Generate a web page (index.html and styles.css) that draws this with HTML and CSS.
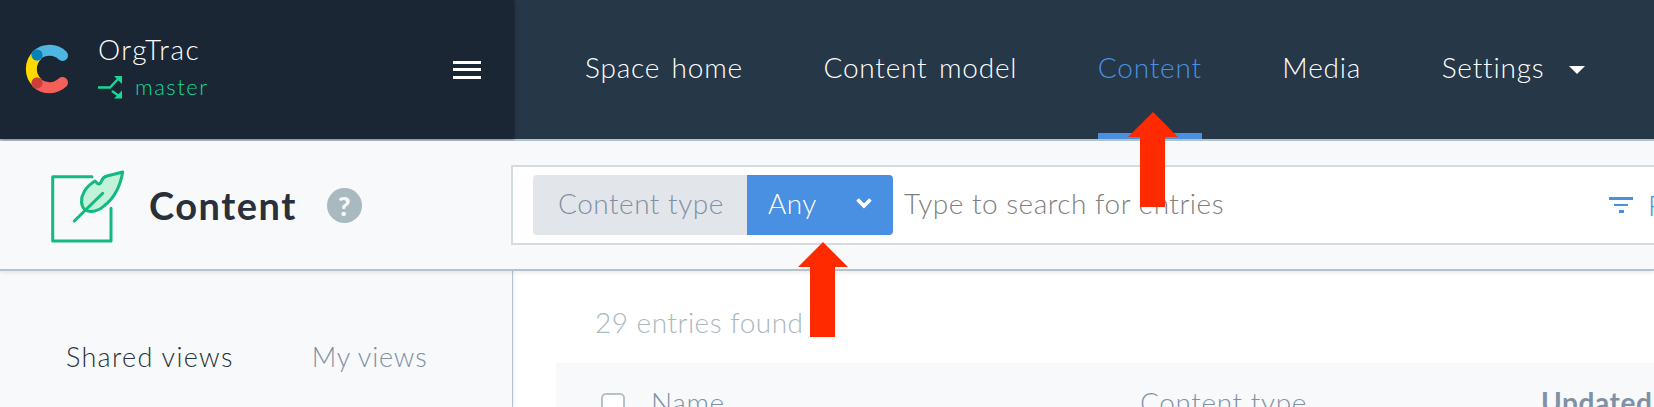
FILE: index.html
```html
<!DOCTYPE html>
<html lang="en">
<head>
    <meta charset="UTF-8">
    <meta name="viewport" content="width=device-width, initial-scale=1.0">
    <title>Content - OrgTrac</title>
    <link rel="stylesheet" href="styles.css">
</head>
<body>
    <div class="topbar">
        <div class="space-panel">
            <svg class="logo" width="44" height="50" viewBox="0 0 44 50">
                <path d="M12.5 11 A19 19 0 0 0 12.5 39" fill="none" stroke="#ffda00" stroke-width="11"/>
                <path d="M12 11 A19 19 0 0 1 37.5 11.5" fill="none" stroke="#4fb5e1" stroke-width="11" stroke-linecap="round"/>
                <path d="M12 39 A19 19 0 0 0 37.5 38.5" fill="none" stroke="#f55f5a" stroke-width="11" stroke-linecap="round"/>
                <circle cx="12" cy="11" r="5.5" fill="#0681b6"/>
                <circle cx="12" cy="39" r="5.5" fill="#cd3f39"/>
            </svg>
            <div class="space-info">
                <div class="space-name">OrgTrac</div>
                <div class="space-env">
                    <svg width="24" height="24" viewBox="0 0 24 24">
                        <path d="M0 12.5 H12 L21 3 M14 16 L21 21" fill="none" stroke="#14d997" stroke-width="2.4"/>
                        <path d="M16 1 H24 V9 Z M16 23.5 H24 V15.5 Z" fill="#14d997"/>
                    </svg>
                    <span>master</span>
                </div>
            </div>
            <div class="hamburger"><span></span><span></span><span></span></div>
        </div>
        <nav class="nav">
            <a class="nav-item">Space home</a>
            <a class="nav-item">Content model</a>
            <a class="nav-item active">Content</a>
            <a class="nav-item">Media</a>
            <a class="nav-item">Settings<i class="caret"></i></a>
        </nav>
    </div>

    <div class="page-header">
        <div class="page-title">
            <svg width="76" height="84" viewBox="0 0 76 84">
                <path d="M41 15.7 H1.7 V80 H60 V47.3" fill="none" stroke="#12b981" stroke-width="3" stroke-linecap="round" stroke-linejoin="round"/>
                <path d="M71.7 11 L56 15 Q52 16 50.5 20 Q49 24 46.5 22.5 L44 20 Q36 25 33 31 C29 38 30 45 34 49 C40 52 48 50 53 45 C62 38 69 27 71.7 11 Z" fill="#c2f2d8" stroke="#12b981" stroke-width="3" stroke-linejoin="round"/>
                <path d="M23.3 60 L51.7 32.3" fill="none" stroke="#12b981" stroke-width="3" stroke-linecap="round"/>
            </svg>
            <h1>Content</h1>
            <span class="help">?</span>
        </div>
        <div class="search-box">
            <div class="pill">
                <span class="pill-label">Content type</span>
                <span class="pill-value">Any
                    <svg width="18" height="12" viewBox="0 0 18 12"><path d="M2.5 2.5 L9 9 L15.5 2.5" fill="none" stroke="#fff" stroke-width="3.6"/></svg>
                </span>
            </div>
            <span class="search-text">Type to search for entries</span>
            <span class="filter">
                <i class="filter-icon"><b></b><b></b><b></b></i>
                Filters
            </span>
        </div>
    </div>

    <div class="body-row">
        <aside class="sidebar">
            <span class="tab current">Shared views</span>
            <span class="tab">My views</span>
        </aside>
        <main class="main">
            <div class="count">29 entries found</div>
            <div class="table-head">
                <span class="check"></span>
                <span>Name</span>
                <span>Content type</span>
                <span class="sorted">Updated</span>
            </div>
        </main>
    </div>

    <svg class="arrow arrow-nav" width="50" height="96" viewBox="0 0 50 96"><path d="M25 0 L50 25 H37 V95 H12 V25 H0 Z" fill="#ff2a00"/></svg>
    <svg class="arrow arrow-pill" width="50" height="96" viewBox="0 0 50 96"><path d="M25 0 L50 25 H37 V95 H12 V25 H0 Z" fill="#ff2a00"/></svg>
</body>
</html>
```
FILE: styles.css
```css
* {
    box-sizing: border-box;
}
html, body {
    height: 407px;
    overflow: hidden;
}
body {
    margin: 0;
    position: relative;
    font-family: Lato, "Open Sans", sans-serif;
    font-weight: 300;
    background: #fff;
    color: #2a3039;
}
.topbar {
    display: flex;
    height: 141px;
    background: #263748;
    border-bottom: 2px solid #b4c3ca;
}
.space-panel {
    display: flex;
    flex: none;
    align-items: center;
    width: 513px;
    padding-left: 25px;
    background: #1a2634;
    box-shadow: 1px 0 3px rgba(0,0,0,0.5);
}
.logo {
    margin-top: -1px;
}
.space-info {
    margin-left: 29px;
    width: 355px;
}
.space-name {
    color: #fff;
    font-size: 28px;
    letter-spacing: 1.5px;
    line-height: 30px;
    margin-top: -7px;
}
.space-env {
    display: flex;
    align-items: center;
    gap: 13px;
    color: #14d997;
    font-size: 22px;
    letter-spacing: 1.5px;
    line-height: 24px;
    margin-top: 11px;
}
.hamburger {
    display: flex;
    flex-direction: column;
    gap: 4.5px;
    width: 28px;
}
.hamburger span {
    height: 3px;
    background: #fff;
}
.nav {
    display: flex;
    gap: 80.5px;
    padding-left: 72px;
}
.nav-item {
    display: flex;
    align-items: center;
    height: 139px;
    padding-bottom: 5px;
    color: #fff;
    font-size: 28px;
    letter-spacing: 0.8px;
    word-spacing: 3px;
    white-space: nowrap;
}
.nav-item.active {
    color: #4a90e2;
    border-bottom: 6px solid #4a90e2;
    padding-bottom: 0;
    padding-top: 1px;
}
.caret {
    margin-left: 25px;
    margin-top: 5px;
    border-left: 8px solid transparent;
    border-right: 8px solid transparent;
    border-top: 8px solid #fff;
}
.page-header {
    position: relative;
    display: flex;
    height: 130px;
    padding-top: 24px;
    background: #f7f9fa;
    border-bottom: 2px solid #b4c3ca;
    box-shadow: 0 2px 4px rgba(0,0,0,0.08);
}
.page-title {
    display: flex;
    flex: none;
    align-items: center;
    align-self: flex-start;
    width: 511px;
    height: 80px;
    padding-left: 51px;
}
.page-title svg {
    flex: none;
    margin-top: -4px;
}
.page-title h1 {
    margin: 0 0 0 22px;
    font-size: 38px;
    font-weight: 700;
    letter-spacing: 1.5px;
    color: #2a3039;
}
.help {
    width: 35px;
    height: 35px;
    margin-left: 30px;
    border-radius: 50%;
    background: #a9b9c0;
    color: #f7f9fa;
    font-size: 27px;
    font-weight: 900;
    line-height: 35px;
    text-align: center;
}
.search-box {
    display: flex;
    align-items: center;
    flex: none;
    width: 1143px;
    height: 80px;
    padding-left: 20px;
    background: #fff;
    border: 2px solid #d3dce0;
    border-right: none;
    white-space: nowrap;
}
.pill {
    display: flex;
    flex: none;
    height: 60px;
    width: 360px;
    font-size: 28px;
    letter-spacing: 0.5px;
    border-radius: 4px;
    overflow: hidden;
}
.pill-label {
    display: flex;
    flex: none;
    align-items: center;
    width: 214px;
    padding: 0 0 4px 25px;
    background: #e2e6ea;
    color: #8091a5;
}
.pill-value {
    display: flex;
    align-items: center;
    justify-content: space-between;
    flex: 1;
    padding: 0 20px 4px 21px;
    background: #4a90e2;
    color: #fff;
}
.search-text {
    flex: none;
    margin: 0 0 5px 11px;
    width: 705px;
    color: #808080;
    font-size: 28px;
    letter-spacing: 0.5px;
}
.filter {
    display: flex;
    flex: none;
    align-items: center;
    gap: 15px;
    color: #4a90e2;
    font-size: 28px;
}
.filter-icon {
    display: flex;
    flex-direction: column;
    align-items: center;
    gap: 4px;
    width: 24px;
}
.filter-icon b {
    display: block;
    width: 24px;
    height: 2.5px;
    background: #4a90e2;
}
.filter-icon b:nth-child(2) {
    width: 14px;
}
.filter-icon b:nth-child(3) {
    width: 5px;
}
.body-row {
    display: flex;
    height: 136px;
}
.sidebar {
    display: flex;
    flex: none;
    gap: 78px;
    width: 513px;
    padding: 69px 0 0 66px;
    background: #f7f9fa;
    border-right: 1px solid #b4c3ca;
    box-shadow: 1px 0 3px rgba(0,0,0,0.08);
    font-size: 27px;
    letter-spacing: 0.8px;
}
.tab {
    color: #8091a5;
}
.tab.current {
    color: #2a3039;
    letter-spacing: 1.3px;
}
.main {
    flex: 1;
    padding-left: 43px;
    overflow: hidden;
}
.count {
    height: 92px;
    padding: 34px 0 0 39px;
    color: #a9b9c0;
    font-size: 28px;
    letter-spacing: 0.5px;
}
.table-head {
    display: grid;
    grid-template-columns: 50px 489px 401px 1fr;
    align-items: start;
    height: 60px;
    padding: 22px 0 0 45px;
    background: #f7f9fa;
    color: #8091a5;
    font-size: 28px;
    letter-spacing: 0.6px;
    white-space: nowrap;
}
.check {
    width: 24px;
    height: 24px;
    margin-top: 8px;
    background: #fff;
    border: 2px solid #b4c3ca;
    border-radius: 5px;
}
.sorted {
    font-weight: 700;
}
.arrow {
    position: absolute;
}
.arrow-nav {
    left: 1128px;
    top: 112px;
}
.arrow-pill {
    left: 798px;
    top: 242px;
}
```
